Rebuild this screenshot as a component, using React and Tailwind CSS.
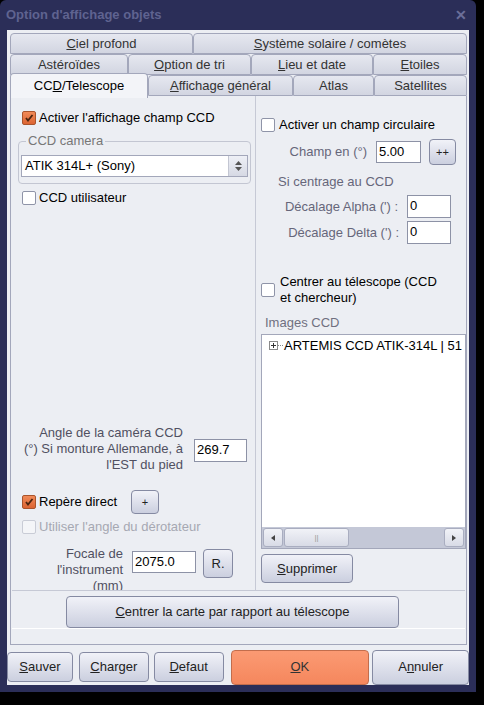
import React from 'react';

const Check = ({ checked, disabled }) => (
  <span
    className={
      'inline-flex w-[14px] h-[14px] shrink-0 items-center justify-center rounded-[2px] border ' +
      (checked
        ? 'bg-linear-to-b from-[#f08a58] to-[#dc6432] border-[#a9542c]'
        : disabled
        ? 'bg-[#f4f5f8] border-[#c9ccd6]'
        : 'bg-white border-[#8f94a8]')
    }
  >
    {checked && (
      <svg width="10" height="10" viewBox="0 0 10 10">
        <path d="M2 5 L4 7.5 L8.5 2" stroke="#4a2410" strokeWidth="1.8" fill="none" />
      </svg>
    )}
  </span>
);

const Btn = ({ children, className = '' }) => (
  <div
    className={
      'flex items-center justify-center rounded-[4px] border border-[#858aa2] bg-linear-to-b from-[#f1f2f8] to-[#cbcfdf] text-[#222] ' +
      className
    }
  >
    {children}
  </div>
);

const Input = ({ value, className = '' }) => (
  <div className={'bg-white border border-[#8d92a6] px-[2px] leading-[20px] text-black ' + className}>{value}</div>
);

const Tab = ({ w, children, selected }) => (
  <div
    style={{ width: w }}
    className={
      'flex items-center justify-center border border-[#a3a7bb] rounded-t-[4px] text-[#333] ' +
      (selected
        ? 'h-[25px] -mt-[2px] -mb-[2px] bg-[#f3f4f8] border-b-0 text-black relative z-10'
        : 'h-[21px] bg-linear-to-b from-[#e6e8f0] to-[#d2d5e1]')
    }
  >
    {children}
  </div>
);

export default function App() {
  return (
    <div className="w-[484px] h-[705px] bg-black overflow-hidden font-['Liberation_Sans',Arial,sans-serif] text-[13px] text-black">
      <div className="w-[476px] h-[692px] bg-[#2b2e58] rounded-t-[6px] flex flex-col px-[7px] pb-[7px]">
        {/* title */}
        <div className="h-[30px] flex items-center justify-between">
          <span className="font-bold text-[#5f6390] text-[13px] -ml-[1px]">Option d'affichage objets</span>
          <span className="font-bold text-[#6b6f99] text-[14px] mr-[2px]">✕</span>
        </div>

        <div className="flex-1 bg-[#eceef3] flex flex-col">
          {/* tabs */}
          <div className="pt-[3px] pl-[3px] pr-[2px] flex flex-col">
            <div className="flex">
              <Tab w={183}><span><u>C</u>iel profond</span></Tab>
              <Tab w={274}><span><u>S</u>ystème solaire / comètes</span></Tab>
            </div>
            <div className="flex">
              <Tab w={118}>Astéroïdes</Tab>
              <Tab w={123}><span><u>O</u>ption de tri</span></Tab>
              <Tab w={122}><span><u>L</u>ieu et date</span></Tab>
              <Tab w={94}><span><u>E</u>toiles</span></Tab>
            </div>
            <div className="flex items-end">
              <Tab w={138} selected><span>CC<u>D</u>/Telescope</span></Tab>
              <Tab w={145}><span><u>A</u>ffichage général</span></Tab>
              <Tab w={81}>Atlas</Tab>
              <Tab w={93}>Satellites</Tab>
            </div>

            {/* panel */}
            <div className="h-[549px] bg-[#eceef3] border-x border-b border-[#a3a7bb] flex flex-col">
              <div className="h-[494px] flex overflow-hidden">
                {/* left column */}
                <div className="w-[245px] border-r border-[#c6c9d5] flex flex-col pl-[11px] pr-[5px]">
                  <div className="shrink-0 mt-[15px] flex items-center gap-[3px] h-[14px]">
                    <Check checked />
                    <span>Activer l'affichage champ CCD</span>
                  </div>
                  <div className="shrink-0 relative mt-[16px] ml-[-4px] w-[233px] h-[43px] border border-[#c3c6d2] rounded-[4px] px-[2px]">
                    <span className="absolute -top-[9px] left-[7px] px-[2px] bg-[#eceef3] text-[#777] leading-[16px]">CCD camera</span>
                    <div className="mt-[13px] h-[22px] bg-white border border-[#a3a7ba] flex items-center justify-between">
                      <span className="pl-[3px]">ATIK 314L+ (Sony)</span>
                      <span className="w-[19px] h-[20px] bg-linear-to-b from-[#eef0f6] to-[#d6d9e4] border-l border-[#c3c6d2] flex flex-col items-center justify-center gap-[2px]">
                        <svg width="7" height="4" viewBox="0 0 7 4"><path d="M0 4 L3.5 0 L7 4Z" fill="#555" /></svg>
                        <svg width="7" height="4" viewBox="0 0 7 4"><path d="M0 0 L3.5 4 L7 0Z" fill="#555" /></svg>
                      </span>
                    </div>
                  </div>
                  <div className="shrink-0 mt-[7px] flex items-center gap-[3px] h-[14px]">
                    <Check />
                    <span>CCD utilisateur</span>
                  </div>

                  <div className="shrink-0 mt-[220px] flex items-center">
                    <div className="w-[161px] flex flex-col items-end whitespace-nowrap text-[#505061] leading-[16px]">
                      <span>Angle de la caméra CCD</span>
                      <span>(°) Si monture Allemande, à</span>
                      <span>l'EST du pied</span>
                    </div>
                    <Input value="269.7" className="ml-[11px] w-[53px] h-[23px] mt-[3px]" />
                  </div>

                  <div className="shrink-0 mt-[17px] flex items-center h-[24px]">
                    <Check checked />
                    <span className="ml-[3px]">Repère direct</span>
                    <Btn className="ml-[14px] w-[28px] h-[24px] text-[11px]">+</Btn>
                  </div>
                  <div className="shrink-0 mt-[6px] flex items-center gap-[3px] h-[14px]">
                    <Check disabled />
                    <span className="text-[#a6a8b2]">Utiliser l'angle du dérotateur</span>
                  </div>

                  <div className="shrink-0 mt-[12px] flex items-start">
                    <div className="w-[101px] flex flex-col items-end whitespace-nowrap text-[#505061] leading-[16px]">
                      <span>Focale de</span>
                      <span>l'instrument</span>
                      <span>(mm)</span>
                    </div>
                    <Input value="2075.0" className="ml-[9px] mt-[5px] w-[64px] h-[22px]" />
                    <Btn className="ml-[7px] mt-[3px] w-[30px] h-[29px]">R.</Btn>
                  </div>
                </div>

                {/* right column */}
                <div className="flex-1 flex flex-col pl-[5px] pr-[1px]">
                  <div className="mt-[22px] flex items-center gap-[4px] h-[14px]">
                    <Check />
                    <span>Activer un champ circulaire</span>
                  </div>
                  <div className="mt-[7px] flex items-center h-[26px]">
                    <span className="w-[106px] text-right text-[#66667a]">Champ en (°)</span>
                    <Input value="5.00" className="ml-[9px] w-[45px] h-[22px]" />
                    <Btn className="ml-[8px] w-[27px] h-[26px] text-[11px]">++</Btn>
                  </div>
                  <div className="mt-[9px] ml-[17px] text-[#66667a] leading-[16px]">Si centrage au CCD</div>
                  <div className="mt-[5px] flex items-center h-[23px]">
                    <span className="w-[137px] text-right text-[#66667a]">Décalage Alpha (') :</span>
                    <Input value="0" className="ml-[9px] w-[44px] h-[23px]" />
                  </div>
                  <div className="mt-[3px] flex items-center h-[23px]">
                    <span className="w-[138px] text-right text-[#66667a]">Décalage Delta (') :</span>
                    <Input value="0" className="ml-[8px] w-[44px] h-[23px]" />
                  </div>
                  <div className="mt-[30px] flex items-center">
                    <Check />
                    <span className="ml-[5px] leading-[16px]">
                      Centrer au télescope (CCD
                      <br />
                      et chercheur)
                    </span>
                  </div>
                  <div className="mt-[9px] ml-[4px] text-[#707080] leading-[16px]">Images CCD</div>
                  <div className="mt-[3px] w-[205px] h-[215px] bg-white border border-[#a3a7ba] flex flex-col overflow-hidden">
                    <div className="flex-1 pt-[3px] pl-[7px] flex items-start whitespace-nowrap">
                      <span className="mt-[3px] w-[9px] h-[9px] border border-[#8a8a8a] flex items-center justify-center">
                        <svg width="7" height="7" viewBox="0 0 7 7"><path d="M1 3.5 H6 M3.5 1 V6" stroke="#333" strokeWidth="1" /></svg>
                      </span>
                      <span className="mt-[7px] w-[5px] border-t border-dotted border-[#888]"></span>
                      <span className="leading-[16px] ml-[1px]">ARTEMIS CCD ATIK-314L | 51</span>
                    </div>
                    <div className="h-[21px] bg-[#c4c8d7] flex items-center px-[1px] gap-[1px]">
                      <div className="w-[20px] h-[19px] rounded-[3px] border border-[#a9adc0] bg-linear-to-b from-[#f1f2f7] to-[#d8dbe6] flex items-center justify-center">
                        <svg width="4" height="6" viewBox="0 0 4 6"><path d="M4 0 L0 3 L4 6Z" fill="#444" /></svg>
                      </div>
                      <div className="w-[65px] h-[19px] rounded-[3px] border border-[#a9adc0] bg-linear-to-b from-[#f1f2f7] to-[#d8dbe6] flex items-center justify-center text-[8px] text-[#999]">||</div>
                      <div className="flex-1"></div>
                      <div className="w-[20px] h-[19px] rounded-[3px] border border-[#a9adc0] bg-linear-to-b from-[#f1f2f7] to-[#d8dbe6] flex items-center justify-center">
                        <svg width="4" height="6" viewBox="0 0 4 6"><path d="M0 0 L4 3 L0 6Z" fill="#444" /></svg>
                      </div>
                    </div>
                  </div>
                  <Btn className="mt-[5px] w-[92px] h-[29px]"><span><u>S</u>upprimer</span></Btn>
                </div>
              </div>

              {/* center group */}
              <div className="mx-[1px] h-[39px] border-t border-[#c6c9d5] border-b border-b-white flex items-start justify-center">
                <Btn className="mt-[5px] ml-[-12px] w-[333px] h-[32px]"><span><u>C</u>entrer la carte par rapport au télescope</span></Btn>
              </div>
            </div>
          </div>

          {/* bottom buttons */}
          <div className="mt-[4px] flex items-center h-[36px]">
            <Btn className="w-[66px] h-[30px]"><span><u>S</u>auver</span></Btn>
            <Btn className="ml-[6px] w-[70px] h-[30px]"><span><u>C</u>harger</span></Btn>
            <Btn className="ml-[5px] w-[70px] h-[30px]"><span><u>D</u>efaut</span></Btn>
            <div className="ml-[7px] w-[139px] h-[35px] rounded-[4px] border border-[#c26d4c] bg-linear-to-b from-[#fb9a73] to-[#f5875d] flex items-center justify-center text-[#333]">
              <span><u>O</u>K</span>
            </div>
            <Btn className="ml-[3px] w-[97px] h-[35px]"><span>A<u>n</u>nuler</span></Btn>
          </div>
        </div>
      </div>
    </div>
  );
}
